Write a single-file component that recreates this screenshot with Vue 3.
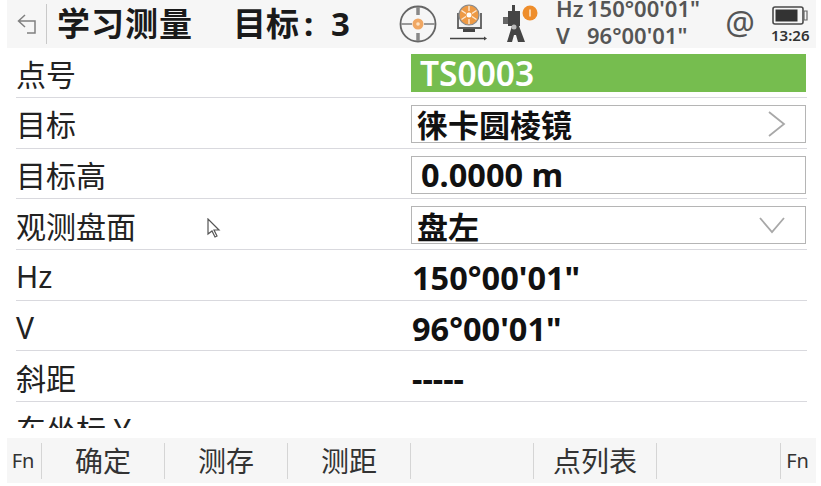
<script setup>
const softkeys = ["确定", "测存", "测距", "", "点列表", ""]
</script>

<template>
  <div class="screen">
    <header class="topbar">
      <svg class="back" width="20" height="22" viewBox="0 0 20 22">
        <path d="M8 2 1.500 8 8 14M1.500 8H18V20H10" fill="none" stroke="#808080" stroke-width="1.500" />
      </svg>
      <h1 class="title">学习测量</h1>
      <div class="target">目标<span class="colon">:</span>3</div>

      <svg class="icon-aim" width="38" height="38" viewBox="0 0 38 38">
        <circle cx="19" cy="19" r="17.500" fill="none" stroke="#666" stroke-width="1.800" />
        <path d="M2 19h11M25 19h11" stroke="#999" stroke-width="1.800" />
        <path d="M19 2v8M19 28v8" stroke="#888" stroke-width="3.500" />
        <circle cx="19" cy="19" r="5.500" fill="#f0a763" />
        <circle cx="19" cy="19" r="1.800" fill="#fde3c4" />
      </svg>

      <svg class="icon-prism" width="38" height="42" viewBox="0 0 38 42">
        <path d="M8 10v15h23V10" fill="#f2f2f2" stroke="#5c5c5c" stroke-width="1.800" />
        <circle cx="19" cy="12" r="10" fill="#ee9a45" stroke="#8a8a8a" stroke-width="1.200" />
        <circle cx="19" cy="12" r="2.500" fill="#fff" />
        <path d="M19 3v5M19 16v5M11.500 7.500l4.500 3M22 13.500l4.500 3M26.500 7.500l-4.500 3M16 13.500l-4.500 3" stroke="#fde9d3" stroke-width="1.400" />
        <path d="M13 26h12v3H13z" fill="#444" />
        <path d="M0 35.500h35" stroke="#444" stroke-width="1.500" />
        <path d="M34 33.500l3 2-3 2z" fill="#444" />
      </svg>

      <svg class="icon-station" width="40" height="42" viewBox="0 0 40 42">
        <path d="M12 2h3v6h5v15h-1l6 16h-7l-2-7h-2l-2 7H7l5-16H8V8h4z" fill="#454545" />
        <path d="M3 14h5v7H3z" fill="#666" />
        <circle cx="14" cy="24" r="2.500" fill="#bbb" />
        <circle cx="30" cy="10" r="7.500" fill="#ee8d2b" />
        <path d="M30 6.500v7" stroke="#fde3c4" stroke-width="1.600" />
      </svg>

      <div class="angles">
        <div class="angle"><span class="axis">Hz</span><span>150°00'01"</span></div>
        <div class="angle"><span class="axis">V</span><span>96°00'01"</span></div>
      </div>

      <div class="at">@</div>

      <div class="status">
        <svg width="36" height="19" viewBox="0 0 36 19">
          <rect x="1" y="1" width="30" height="17" rx="2" fill="none" stroke="#4a4a4a" stroke-width="1.600" />
          <rect x="3.500" y="3.500" width="22" height="12" fill="#333" />
          <path d="M32 5h3v9h-3z" fill="none" stroke="#666" stroke-width="1.200" />
        </svg>
        <span>13:26</span>
      </div>
    </header>

    <main class="form">
      <div class="row">
        <span class="label">点号</span>
        <div class="field active">TS0003</div>
      </div>
      <div class="row">
        <span class="label">目标</span>
        <div class="field boxed cjk">
          <span class="cjk-text">徕卡圆棱镜</span>
          <svg width="20" height="28" viewBox="0 0 20 28">
            <path d="M2 2 17 14 2 26" fill="none" stroke="#a8a8a8" stroke-width="1.800" />
          </svg>
        </div>
      </div>
      <div class="row">
        <span class="label">目标高</span>
        <div class="field boxed">0.0000 m</div>
      </div>
      <div class="row">
        <span class="label">观测盘面</span>
        <svg class="cursor" width="14" height="20" viewBox="0 0 14 20">
          <path d="M1 1v15l4-3 3 6 2-1-3-6h5z" fill="#fff" stroke="#555" stroke-width="1.200" />
        </svg>
        <div class="field boxed cjk">
          <span class="cjk-text">盘左</span>
          <svg class="chevron" width="28" height="20" viewBox="0 0 28 20">
            <path d="M2 3 14 17 26 3" fill="none" stroke="#a8a8a8" stroke-width="1.800" />
          </svg>
        </div>
      </div>
      <div class="row">
        <span class="label">Hz</span>
        <div class="field plain">150°00'01"</div>
      </div>
      <div class="row">
        <span class="label">V</span>
        <div class="field plain">96°00'01"</div>
      </div>
      <div class="row">
        <span class="label">斜距</span>
        <div class="field plain">-----</div>
      </div>
      <div class="row">
        <span class="label">东坐标 Y</span>
      </div>
    </main>

    <footer class="softbar">
      <span class="fn">Fn</span>
      <div class="keys">
        <button v-for="(key, i) in softkeys" :key="i" class="key">{{ key }}</button>
      </div>
      <span class="fn">Fn</span>
    </footer>
  </div>
</template>

<style>
html, body {
  margin: 0;
  background: #fff;
  overflow: hidden;
}
</style>

<style scoped>
.screen {
  width: 821px;
  height: 486px;
  display: flex;
  flex-direction: column;
  padding: 0 5px 3px 7px;
  box-sizing: border-box;
  background: #fff;
  color: #1a1a1a;
  font-family: "Noto Sans", "Noto Sans CJK SC", sans-serif;
  overflow: hidden;
}

.topbar {
  height: 47.500px;
  flex: none;
  display: flex;
  align-items: center;
  background: #f6f6f6;
}

.back {
  margin-left: 10px;
  margin-right: 9px;
  flex: none;
}

.title {
  margin: 0;
  padding-left: 10px;
  height: 40px;
  line-height: 40px;
  border-left: 1px solid #c9c9c9;
  font-size: 33px;
  font-weight: 700;
  width: 176px;
  flex: none;
  letter-spacing: 1px;
}

.target {
  width: 166px;
  flex: none;
  font-size: 33px;
  line-height: 40px;
  font-weight: 700;
  white-space: pre;
}

.colon {
  display: inline-block;
  width: 32px;
  padding-left: 5px;
  box-sizing: border-box;
}

.icon-aim {
  flex: none;
  margin-right: 13px;
}

.icon-prism {
  flex: none;
  margin-right: 12px;
}

.icon-station {
  flex: none;
  margin-right: 16px;
}

.angles {
  flex: none;
  align-self: flex-start;
  width: 167px;
  display: flex;
  flex-direction: column;
  gap: 11px;
  font-size: 22px;
  font-weight: 600;
  color: #555;
  line-height: 16px;
}

.angle {
  display: flex;
}

.axis {
  width: 31px;
}

.at {
  flex: none;
  width: 34px;
  padding-bottom: 2px;
  font-size: 33px;
  line-height: 40px;
  color: #555;
  text-align: center;
}

.status {
  flex: none;
  margin-left: 15px;
  margin-top: 3px;
  display: flex;
  flex-direction: column;
  align-items: flex-start;
  font-size: 15px;
  font-weight: 600;
  line-height: 20px;
  color: #333;
}

.status span {
  margin-left: -1px;
}

.form {
  height: 380.500px;
  flex: none;
  overflow: hidden;
  padding: 0 9px;
}

.row {
  height: 50.670px;
  box-sizing: border-box;
  border-bottom: 1px solid #d9d9de;
  padding-top: 2px;
  display: flex;
  align-items: center;
  position: relative;
}

.row:last-child {
  border-bottom: 0;
}

.label {
  width: 395px;
  flex: none;
  padding-top: 3px;
  font-size: 30px;
  line-height: 40px;
  color: #222;
}

.cursor {
  position: absolute;
  left: 191px;
  top: 19px;
}

.field {
  width: 395px;
  height: 38px;
  box-sizing: border-box;
  display: flex;
  align-items: center;
  justify-content: space-between;
  padding: 0 9px;
  font-size: 32.500px;
  line-height: 38px;
  font-weight: 700;
  color: #111;
}

.field.active {
  background: #76bd4f;
  color: #fff;
  font-size: 33.500px;
  font-weight: 600;
}

.field.boxed {
  border: 1px solid #b5b5b5;
  background: #fff;
}

.field.cjk {
  padding-left: 5px;
  font-size: 31px;
  padding-right: 18px;
}

.cjk-text {
  padding-top: 3px;
}

.field.plain {
  padding-left: 1px;
  padding-top: 4px;
}

.chevron {
  margin-right: 1px;
}

.softbar {
  height: 45px;
  margin-top: 10px;
  flex: none;
  display: flex;
  align-items: center;
  background: #f6f6f6;
}

.fn {
  width: 34px;
  flex: none;
  box-sizing: border-box;
  padding-right: 2px;
  text-align: center;
  font-size: 20px;
  color: #333;
}

.fn:last-child {
  width: 35px;
}

.keys {
  flex: 1;
  display: grid;
  grid-template-columns: repeat(6, 1fr);
  height: 36px;
  border-left: 1px solid #d5d5d5;
  border-right: 1px solid #d5d5d5;
}

.key {
  border: 0;
  border-right: 1px solid #d5d5d5;
  background: none;
  padding: 0;
  font: inherit;
  font-size: 28px;
  line-height: 36px;
  color: #333;
}

.key:last-child {
  border-right: 0;
}
</style>
